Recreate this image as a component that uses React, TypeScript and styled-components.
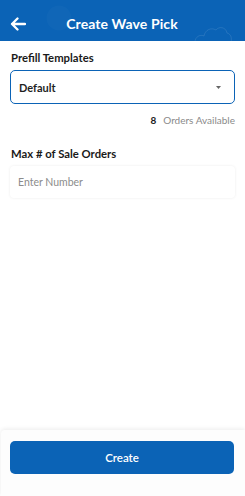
import React from "react";
import styled, { createGlobalStyle } from "styled-components";

const Global = createGlobalStyle`
  html, body { margin: 0; padding: 0; background: #ffffff; }
  body { font-family: Lato, "Noto Sans", "Liberation Sans", sans-serif; -webkit-font-smoothing: antialiased; }
  * { box-sizing: border-box; }
`;

const Page = styled.div`
  height: 496px;
  width: 245px;
  display: flex;
  flex-direction: column;
  background: #ffffff;
  overflow: hidden;
`;

const Header = styled.header`
  position: relative;
  height: 41px;
  background: #0b63b6;
  display: flex;
  align-items: center;
  padding: 6px 10px 0 9px;
  overflow: hidden;
`;

const BackButton = styled.button`
  border: 0;
  background: transparent;
  padding: 0;
  width: 17px;
  height: 17px;
  display: flex;
  align-items: center;
  justify-content: center;
  cursor: pointer;
  position: relative;
  z-index: 1;
`;

const Title = styled.h1`
  flex: 1;
  margin: 0 17px 0 0;
  text-align: center;
  color: #ffffff;
  font-size: 14px;
  font-weight: 700;
  letter-spacing: 0.1px;
  position: relative;
  z-index: 1;
`;

const Decor = styled.svg<{ $left: number; $top: number }>`
  position: absolute;
  left: ${(p) => p.$left}px;
  top: ${(p) => p.$top}px;
  pointer-events: none;
`;

const Content = styled.main`
  flex: 1;
  display: flex;
  flex-direction: column;
  padding: 10px 10px 0 10px;
`;

const Label = styled.label<{ $top?: number }>`
  display: block;
  margin: ${(p) => p.$top ?? 0}px 0 0 1px;
  font-size: 11.3px;
  font-weight: 700;
  color: #1a1a1a;
  line-height: 14px;
`;

const Select = styled.div`
  margin-top: 5px;
  height: 34px;
  border: 1.5px solid #0b63b6;
  border-radius: 5px;
  display: flex;
  align-items: center;
  padding: 0 13px 0 8px;
  background: #ffffff;
`;

const SelectValue = styled.span`
  flex: 1;
  font-size: 11px;
  font-weight: 700;
  color: #1f1f1f;
`;

const Available = styled.div`
  margin-top: 10px;
  display: flex;
  justify-content: flex-end;
  align-items: baseline;
  gap: 7px;
  font-size: 10px;
  line-height: 12px;
`;

const Count = styled.span`
  font-weight: 700;
  color: #1a1a1a;
`;

const Muted = styled.span`
  color: #8a8a8a;
`;

const Input = styled.input`
  margin-top: 5px;
  height: 32px;
  width: 100%;
  border: 0;
  border-radius: 4px;
  background: #ffffff;
  box-shadow: 0 0 3px rgba(0, 0, 0, 0.08);
  padding: 0 8px;
  font-family: inherit;
  font-size: 10.5px;
  color: #1a1a1a;
  outline: none;
  &::placeholder { color: #8c8c8c; }
`;

const Footer = styled.footer`
  height: 66px;
  margin-left: 1px;
  background: #fdfdfd;
  border-radius: 4px 0 0 0;
  box-shadow: 0 -1px 4px rgba(0, 0, 0, 0.08);
  padding: 11px 11px 0 9px;
`;

const PrimaryButton = styled.button`
  width: 100%;
  height: 33px;
  border: 0;
  border-radius: 5px;
  background: #0b63b6;
  color: #ffffff;
  font-family: inherit;
  font-size: 11.5px;
  font-weight: 600;
  cursor: pointer;
`;

export default function App() {
  return (
    <>
      <Global />
      <Page>
        <Header>
          <Decor $left={46} $top={5} width="26" height="26" viewBox="0 0 26 26">
            <circle cx="13" cy="13" r="12.5" fill="rgba(255,255,255,0.025)" />
          </Decor>
          <Decor $left={193} $top={24} width="40" height="18" viewBox="0 0 40 18">
            <path
              d="M2 18 C2 13 7 10 11 12 C12 6 18 3 23 6 C26 2 33 3 34 9 C38 10 39 14 38 18"
              fill="none"
              stroke="rgba(255,255,255,0.1)"
              strokeWidth="1"
            />
          </Decor>
          <BackButton aria-label="Back">
            <svg width="16" height="14" viewBox="0 0 16 14">
              <path d="M15 7H2M7.5 1.5L2 7l5.5 5.5" fill="none" stroke="#fff" strokeWidth="2.3" strokeLinecap="round" strokeLinejoin="round" />
            </svg>
          </BackButton>
          <Title>Create Wave Pick</Title>
        </Header>
        <Content>
          <Label>Prefill Templates</Label>
          <Select>
            <SelectValue>Default</SelectValue>
            <svg width="5" height="3" viewBox="0 0 5 3">
              <path d="M0 0h5L2.5 3z" fill="#666" />
            </svg>
          </Select>
          <Available>
            <Count>8</Count>
            <Muted>Orders Available</Muted>
          </Available>
          <Label $top={21}>Max # of Sale Orders</Label>
          <Input placeholder="Enter Number" />
        </Content>
        <Footer>
          <PrimaryButton>Create</PrimaryButton>
        </Footer>
      </Page>
    </>
  );
}
